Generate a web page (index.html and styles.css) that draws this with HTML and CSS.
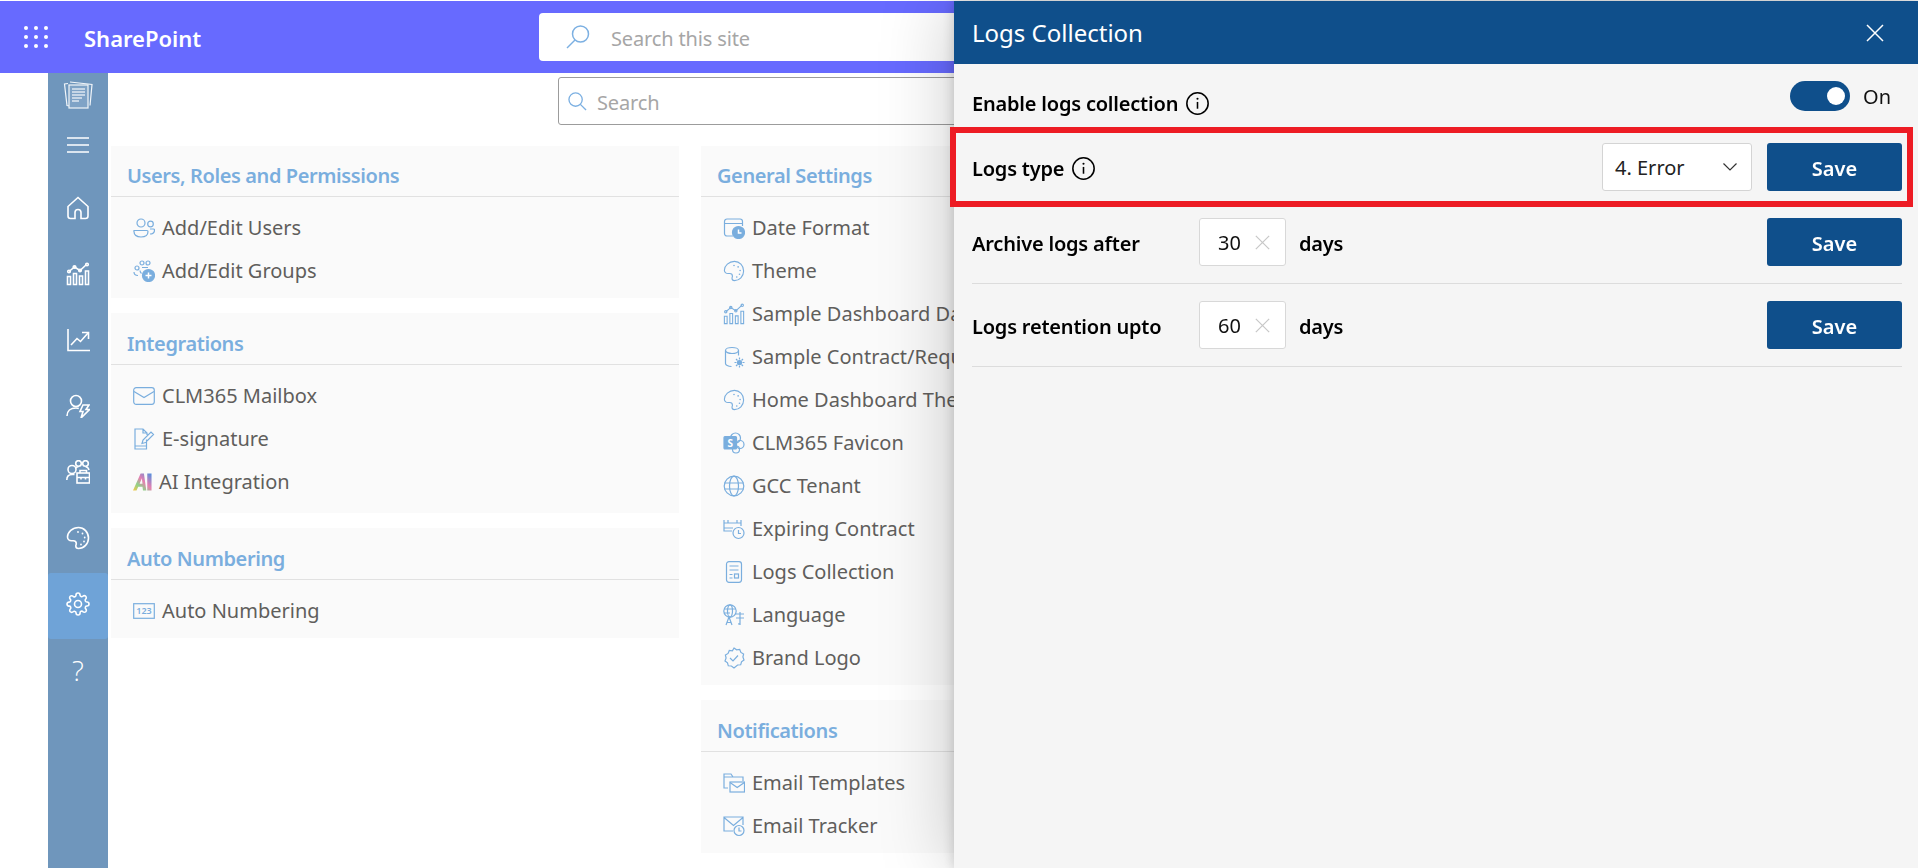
FILE: index.html
```html
<!DOCTYPE html>
<html lang="en">
<head>
<meta charset="utf-8">
<title>Logs Collection</title>
<link rel="stylesheet" href="styles.css">
</head>
<body>
<svg class="defs" xmlns="http://www.w3.org/2000/svg">
  <symbol id="i-chart" viewBox="0 0 24 24"><path d="M1.500 14.500h3v8h-3zM7.500 11.500h3v11h-3zM13.500 14h3v8.500h-3zM19.500 9h3v13.500h-3z"/><path d="M3 9.500l5.500-4.500 5.500 3.500 6.500-6"/><circle cx="3" cy="9.500" r="1.300"/><circle cx="8.500" cy="5" r="1.300"/><circle cx="14" cy="8.500" r="1.300"/><circle cx="21" cy="2.500" r="1.300"/></symbol>
  <symbol id="i-palette" viewBox="0 0 24 24"><path d="M12.500 1.500c5.500 0 10 4.700 10 10.500s-4.500 10.500-10 10.500c-1.500 0-2.700-1.100-2.700-2.500 0-.9.500-1.500.5-2.300 0-1.700-1.300-2.900-3-2.900H5.500c-2.300 0-4-1.700-4-3.700 0-5 5-9.600 11-9.600z"/><circle cx="12" cy="6" r=".9" class="dot"/><circle cx="16.500" cy="7.500" r=".9" class="dot"/><circle cx="18.700" cy="11.500" r=".9" class="dot"/><circle cx="18" cy="15.500" r=".9" class="dot"/><circle cx="15" cy="18.500" r=".9" class="dot"/></symbol>
  <symbol id="i-info" viewBox="0 0 22 22"><circle cx="11" cy="11" r="10.200"/><path d="M11 9.500v6.500"/><circle cx="11" cy="6.500" r="1" class="dot"/></symbol>
  <symbol id="i-close" viewBox="0 0 18 18"><path d="M1 1l16 16M17 1L1 17"/></symbol>
</svg>

<header class="topbar">
  <svg class="waffle" viewBox="0 0 24 22"><circle cx="2" cy="2" r="2"/><circle cx="12" cy="2" r="2"/><circle cx="22" cy="2" r="2"/><circle cx="2" cy="11" r="2"/><circle cx="12" cy="11" r="2"/><circle cx="22" cy="11" r="2"/><circle cx="2" cy="20" r="2"/><circle cx="12" cy="20" r="2"/><circle cx="22" cy="20" r="2"/></svg>
  <span class="brand">SharePoint</span>
  <div class="site-search">
    <svg class="site-search-icon" viewBox="0 0 24 24"><circle cx="14.500" cy="9" r="8"/><path d="M9 15L1 23"/></svg>
    <span class="placeholder">Search this site</span>
  </div>
</header>

<div class="shell">
  <nav class="rail">
    <div class="rail-top">
      <svg class="rail-logo" viewBox="0 0 30 30"><path d="M5 4.500l-3.500.5L4 26.500l3 .5"/><path d="M7 3l22 2.500-2 21"/><rect x="6" y="6" width="19" height="23" class="page"/><path d="M9 10h13M9 13h13M9 16h13M9 19h10M9 22h7" class="lines"/></svg>
      <svg class="rail-menu" viewBox="0 0 22 16"><path d="M0 1h22M0 8h22M0 15h22"/></svg>
    </div>
    <a class="rail-item"><svg viewBox="0 0 24 24"><path d="M2 10.500L12 1.500l10 9v9.500a2.500 2.500 0 0 1-2.500 2.500h-4.500v-6a3 3 0 0 0-6 0v6H4.500A2.500 2.500 0 0 1 2 20z"/></svg></a>
    <a class="rail-item"><svg><use href="#i-chart"/></svg></a>
    <a class="rail-item"><svg viewBox="0 0 24 24"><path d="M2 1v21.500h22"/><path d="M5 17l6-6.500 3.500 3L22 5"/><path d="M16 4.500h6.500V11"/></svg></a>
    <a class="rail-item"><svg viewBox="0 0 24 24"><circle cx="10" cy="7" r="5.500"/><path d="M1 22c0-5 3.500-8 9-8 1 0 2 .1 2.800.4"/><path d="M17 11h6l-3 4.500h3.500L15 24l2-6.500h-3z"/></svg></a>
    <a class="rail-item"><svg viewBox="0 0 24 24"><circle cx="6" cy="9.500" r="4"/><path d="M.8 20c0-3.500 2-5.500 5.200-5.500h2.500"/><circle cx="12.500" cy="3.500" r="2.800"/><circle cx="19.500" cy="3.500" r="2.800"/><path d="M9.500 8.500c.5-1 1.700-1.800 3-1.800M23 10c-.5-2-2-3.300-3.500-3.300"/><rect x="11" y="13" width="12.500" height="10"/><path d="M14 13v-2.500h6.500V13M11 17.500h12.500M15 17.500v2M19.500 17.500v2"/></svg></a>
    <a class="rail-item"><svg><use href="#i-palette"/></svg></a>
    <a class="rail-item rail-item-active"><svg viewBox="0 0 24 24"><circle cx="12" cy="12" r="3.500"/><path d="M19.400 15a1.650 1.650 0 0 0 .33 1.820l.06.06a2 2 0 0 1 0 2.830 2 2 0 0 1-2.830 0l-.06-.06a1.650 1.650 0 0 0-1.820-.33 1.650 1.650 0 0 0-1 1.510V21a2 2 0 0 1-2 2 2 2 0 0 1-2-2v-.09A1.650 1.650 0 0 0 9 19.400a1.650 1.650 0 0 0-1.820.33l-.06.06a2 2 0 0 1-2.830 0 2 2 0 0 1 0-2.830l.06-.06a1.650 1.650 0 0 0 .33-1.820 1.650 1.650 0 0 0-1.510-1H3a2 2 0 0 1-2-2 2 2 0 0 1 2-2h.09A1.650 1.650 0 0 0 4.600 9a1.650 1.650 0 0 0-.33-1.820l-.06-.06a2 2 0 0 1 0-2.830 2 2 0 0 1 2.830 0l.06.06a1.650 1.650 0 0 0 1.820.33H9a1.650 1.650 0 0 0 1-1.510V3a2 2 0 0 1 2-2 2 2 0 0 1 2 2v.09a1.650 1.650 0 0 0 1 1.510 1.650 1.650 0 0 0 1.820-.33l.06-.06a2 2 0 0 1 2.830 0 2 2 0 0 1 0 2.830l-.06.06a1.650 1.650 0 0 0-.33 1.820V9a1.650 1.650 0 0 0 1.510 1H21a2 2 0 0 1 2 2 2 2 0 0 1-2 2h-.09a1.650 1.650 0 0 0-1.510 1z"/></svg></a>
    <a class="rail-item rail-help">?</a>
  </nav>

  <main class="content">
    <div class="content-search">
      <svg class="content-search-icon" viewBox="0 0 20 20"><circle cx="8" cy="8" r="7"/><path d="M13 13l6 6"/></svg>
      <span class="placeholder">Search</span>
    </div>
    <div class="columns">
      <div class="column">
        <section class="card">
          <h2 class="card-title">Users, Roles and Permissions</h2>
          <ul class="items">
            <li class="item"><svg class="ico" viewBox="0 0 22 20"><circle cx="8" cy="5" r="4"/><circle cx="17.500" cy="6" r="2.800"/><path d="M1 12.500h13a1 1 0 0 1 1 1c0 3.500-3 5.500-7 5.500s-7-2-7-5.500a1 1 0 0 1 0-1zM17 11h3.500a1 1 0 0 1 1 1c0 2.500-2 4-4.500 4"/></svg>Add/Edit Users</li>
            <li class="item"><svg class="ico" viewBox="0 0 22 22"><circle cx="4" cy="8" r="2"/><circle cx="9" cy="3" r="2"/><circle cx="15" cy="3" r="2"/><path d="M1 12c0 2 1.500 3.500 4 3.500M9 7.500h6M7 10.500c0 1 .5 2 1.500 3"/><circle cx="15.500" cy="15.500" r="6" class="solid"/><path d="M15.500 12.500v6M12.500 15.500h6" class="on-solid"/></svg>Add/Edit Groups</li>
          </ul>
        </section>
        <section class="card">
          <h2 class="card-title">Integrations</h2>
          <ul class="items items-roomy">
            <li class="item"><svg class="ico" viewBox="0 0 22 18"><rect x=".7" y=".7" width="20.600" height="16.600" rx="2.500"/><path d="M1 4.500l10 6 10-6"/></svg>CLM365 Mailbox</li>
            <li class="item"><svg class="ico" viewBox="0 0 22 22"><path d="M13.500 11.500V21H2V1h8l4 4v2M10 1v4h4M2 18h11M9 15.500l1-3.500 8-8 2.500 2.500-8 8z"/></svg>E-signature</li>
            <li class="item item-ai"><svg class="ico-ai" viewBox="0 0 20 20"><defs><linearGradient id="ai-grad" x1="0" y1="1" x2="1" y2="0"><stop offset="0" stop-color="#f7c948"/><stop offset=".3" stop-color="#8fd18a"/><stop offset=".55" stop-color="#e87fb0"/><stop offset="1" stop-color="#4d8fe0"/></linearGradient></defs><path d="M0 19L8 1h3.500l2.500 18h-3.500l-.5-4H5.500l-1.800 4zM7 11.800h3L9.300 6zM15 1h4.500v18H15z" fill="url(#ai-grad)"/></svg>AI Integration</li>
          </ul>
        </section>
        <section class="card">
          <h2 class="card-title">Auto Numbering</h2>
          <ul class="items">
            <li class="item"><svg class="ico" viewBox="0 0 22 16"><rect x=".7" y=".7" width="20.600" height="14.600"/><text x="11" y="11.300" class="ico-num">123</text></svg>Auto Numbering</li>
          </ul>
        </section>
      </div>
      <div class="column">
        <section class="card">
          <h2 class="card-title">General Settings</h2>
          <ul class="items">
            <li class="item"><svg class="ico" viewBox="0 0 22 22"><path d="M10 19H4a2.500 2.500 0 0 1-2.500-2.500v-12A2.500 2.500 0 0 1 4 2h13a2.500 2.500 0 0 1 2.500 2.500V9M1.500 6.500h18"/><circle cx="15.500" cy="15.500" r="6" class="solid"/><path d="M15.500 12.500v3.500h3" class="on-solid"/></svg>Date Format</li>
            <li class="item"><svg class="ico"><use href="#i-palette"/></svg>Theme</li>
            <li class="item"><svg class="ico"><use href="#i-chart"/></svg>Sample Dashboard Data</li>
            <li class="item"><svg class="ico" viewBox="0 0 22 22"><ellipse cx="9" cy="4.500" rx="6.500" ry="3"/><path d="M2.500 4.500v13c0 1.500 2.500 3 6 3M15.500 4.500v5"/><circle cx="16.500" cy="16.500" r="2" class="solid"/><path d="M16.500 11.500v2M16.500 19.500v2M11.500 16.500h2M19.500 16.500h2M13 13l1.500 1.500M18.500 18.500L20 20M13 20l1.500-1.500M18.500 14.500L20 13"/></svg>Sample Contract/Request</li>
            <li class="item"><svg class="ico"><use href="#i-palette"/></svg>Home Dashboard Theme</li>
            <li class="item"><svg class="ico" viewBox="0 0 22 22"><circle cx="12.500" cy="6" r="5"/><circle cx="17" cy="12.500" r="4"/><circle cx="13" cy="17.500" r="3.500"/><rect x="1" y="4.500" width="12.500" height="12.500" rx="1" class="solid"/><text x="7.200" y="14.500" class="ico-s">S</text></svg>CLM365 Favicon</li>
            <li class="item"><svg class="ico" viewBox="0 0 22 22"><circle cx="11" cy="11" r="9.800"/><ellipse cx="11" cy="11" rx="4.500" ry="9.800"/><path d="M1.500 8h19M1.500 14h19"/></svg>GCC Tenant</li>
            <li class="item"><svg class="ico" viewBox="0 0 22 22"><path d="M1 2v10M18 2v6M5 2v3M14 2v3M1 5h17M1 10h9M1 12v1h8"/><circle cx="15.500" cy="15" r="5.500"/><path d="M15.500 12v3.500h2.500"/></svg>Expiring Contract</li>
            <li class="item"><svg class="ico" viewBox="0 0 22 22"><rect x="3.500" y=".7" width="15" height="20.600" rx="2.500"/><path d="M6.500 5h9M6.500 9h9M6.500 13.500h3M6.500 17h3"/><rect x="11.500" y="13" width="4" height="4"/></svg>Logs Collection</li>
            <li class="item"><svg class="ico" viewBox="0 0 22 22"><circle cx="7" cy="7" r="6.200"/><ellipse cx="7" cy="7" rx="2.500" ry="6.200"/><path d="M1 5h12M1 9h6M3 21l3-8 3 8M4 18.500h4M13 10h8M17 8v13M13 14h8M15 20c2 0 2-1 2-1"/></svg>Language</li>
            <li class="item"><svg class="ico" viewBox="0 0 22 22"><path d="M11 1l2.600 1.800 3.100-.3 1.200 2.900 2.700 1.600-.7 3 1.100 3-2.500 1.800-.8 3-3.100.2L11 21l-2.600-2-3.100-.2-.8-3L2 14l1.100-3-.7-3 2.700-1.600 1.200-2.900 3.100.3z"/><path d="M7 11l3 3 5-5.500"/></svg>Brand Logo</li>
          </ul>
        </section>
        <section class="card">
          <h2 class="card-title">Notifications</h2>
          <ul class="items">
            <li class="item"><svg class="ico" viewBox="0 0 22 20"><path d="M5 15H1V1h7l2 3h10v4M1 4h9"/><rect x="7" y="9" width="14.500" height="10"/><path d="M7 9.500l7.200 5 7.200-5"/></svg>Email Templates</li>
            <li class="item"><svg class="ico" viewBox="0 0 22 20"><path d="M10 15H1V1h19v8M1 1.500l9.500 8 9.500-8"/><circle cx="16" cy="14.500" r="5"/><path d="M16 11.500v3.500h2.500"/></svg>Email Tracker</li>
          </ul>
        </section>
      </div>
    </div>
  </main>
</div>

<aside class="panel">
  <div class="panel-head">
    <h1 class="panel-title">Logs Collection</h1>
    <svg class="panel-close"><use href="#i-close"/></svg>
  </div>
  <div class="panel-body">
    <div class="row row-enable">
      <div class="label label-enable">Enable logs collection <svg class="info"><use href="#i-info"/></svg></div>
      <div class="toggle-group">
        <span class="toggle"><span class="knob"></span></span>
        <span class="toggle-text">On</span>
      </div>
    </div>
    <div class="row row-type">
      <div class="label">Logs type <svg class="info"><use href="#i-info"/></svg></div>
      <div class="select">4. Error<svg class="chevron" viewBox="0 0 14 8"><path d="M.5.500L7 7l6.500-6.500"/></svg></div>
      <button class="save">Save</button>
    </div>
    <div class="row row-archive row-line">
      <div class="label label-fixed">Archive logs after</div>
      <div class="number">30<svg class="number-clear"><use href="#i-close"/></svg></div>
      <span class="unit">days</span>
      <button class="save">Save</button>
    </div>
    <div class="row row-line">
      <div class="label label-fixed">Logs retention upto</div>
      <div class="number">60<svg class="number-clear"><use href="#i-close"/></svg></div>
      <span class="unit">days</span>
      <button class="save">Save</button>
    </div>
  </div>
</aside>
<div class="callout"></div>
</body>
</html>
```
FILE: styles.css
```css
* { box-sizing: border-box; }
html, body { margin: 0; height: 868px; overflow: hidden; }
body {
  padding-top: 1px;
  background: #fff;
  font-family: "Noto Sans", "Open Sans", sans-serif;
  font-size: 20px;
  color: #000;
}
.defs { display: none; }

/* top bar */
.topbar {
  display: flex;
  align-items: center;
  height: 72px;
  background: #676aff;
  color: #fff;
}
.waffle { width: 24px; height: 22px; margin-left: 24px; fill: #fff; }
.brand { width: 117px; margin-left: 36px; padding-top: 2px; font-size: 22px; font-weight: 600; white-space: nowrap; }
.site-search {
  display: flex;
  align-items: center;
  width: 1000px;
  height: 48px;
  margin-left: 338px;
  background: #fff;
  border-radius: 4px;
  color: #a6a6a6;
  letter-spacing: -0.15px;
}
.placeholder { padding-top: 2px; }
.site-search-icon {
  width: 24px; height: 24px; margin-left: 27px; margin-right: 21px;
  fill: none; stroke: #7cb0e2; stroke-width: 1.500;
}

/* layout */
.shell { display: flex; padding-left: 48px; height: 795px; }
.rail { width: 60px; flex: none; background: #6f96bc; color: #fff; }
.rail-top { display: flex; flex-direction: column; align-items: center; height: 102px; padding-top: 6px; }
.rail-logo { width: 30px; height: 30px; fill: none; stroke: #f1f5f9; stroke-width: 1.200; }
.rail-logo .page { fill: #7fa3c6; }
.rail-logo .lines { stroke: #c6d6e6; stroke-width: 1.800; }
.rail-menu { width: 22px; height: 16px; margin-top: 28px; fill: none; stroke: #fff; stroke-width: 1.300; }
.rail-item {
  display: flex;
  align-items: center;
  justify-content: center;
  height: 66px;
  border-radius: 3px;
}
.rail-item svg {
  width: 24px; height: 24px;
  fill: none; stroke: #fff; stroke-width: 1.600;
}
.dot { fill: currentColor; stroke: none; }
.rail-item-active { margin: 2px 0 -2px; padding-bottom: 4px; background: #6fa3d7; }
.rail-help { font-size: 28px; font-weight: 300; font-family: "Open Sans", sans-serif; }

.content { flex: 1; min-width: 0; padding-left: 3px; }
.content-search {
  display: flex;
  align-items: center;
  width: 900px;
  height: 48px;
  margin: 4px 0 21px 447px;
  border: 1px solid #9c9c9c;
  border-radius: 3px;
  color: #a6a6a6;
  letter-spacing: -0.15px;
}
.content-search-icon {
  width: 19px; height: 19px; margin-left: 9px; margin-right: 10px;
  fill: none; stroke: #7cb0e2; stroke-width: 1.400;
}
.columns { display: grid; grid-template-columns: 568px 568px; column-gap: 22px; }
.column { display: flex; flex-direction: column; gap: 15px; }

/* cards */
.card { background: #fafafa; }
.card-title {
  height: 51px;
  margin: 0;
  padding: 16px 16px 0;
  border-bottom: 1px solid #e1e1e1;
  font-size: 20px;
  line-height: 28px;
  font-weight: 600;
  color: #7aaede;
  letter-spacing: -0.4px;
}
.card + .card .card-title { height: 52px; padding-top: 17px; }
.items { margin: 0; padding: 10px 0 5px; list-style: none; }
.items-roomy { padding-bottom: 9px; }
.item {
  display: flex;
  align-items: center;
  height: 43px;
  padding-left: 22px;
  padding-bottom: 2px;
  color: #605e5c;
  white-space: nowrap;
}
.ico {
  width: 22px; height: 22px; flex: none; margin-right: 7px;
  fill: none; stroke: #7aaede; stroke-width: 1.200; color: #7aaede;
}
.ico .solid { fill: #7aaede; }
.ico .on-solid { stroke: #fff; stroke-width: 1.500; }
.ico-num { font-family: "Noto Sans", sans-serif; font-size: 9px; font-weight: 600; fill: #7aaede; stroke: none; text-anchor: middle; }
.ico-s { font-family: "Noto Sans", sans-serif; font-size: 10px; font-weight: 700; fill: #fff; stroke: none; text-anchor: middle; }
.ico-ai { width: 19px; height: 20px; flex: none; margin-right: 7px; }

/* panel */
.panel {
  position: fixed;
  top: 1px; right: 0; bottom: 0;
  width: 964px;
  background: #f5f5f5;
  box-shadow: 0 0 12px rgba(0, 0, 0, .18), 0 0 70px rgba(0, 0, 0, .22);
}
.panel-head {
  display: flex;
  align-items: center;
  justify-content: space-between;
  height: 63px;
  padding: 0 34px 0 18px;
  background: #0f4f8b;
  color: #fff;
}
.panel-title { margin: 0; font-size: 24px; font-weight: 400; }
.panel-close { width: 18px; height: 18px; fill: none; stroke: #fff; stroke-width: 1.500; }
.panel-body { padding: 0 16px 0 18px; }
.row { display: flex; align-items: center; padding: 17px 0; }
.row-enable { align-items: flex-start; height: 63px; padding: 0; justify-content: space-between; }
.row-type { padding: 16px 0; }
.row-archive { padding-top: 11px; }
.row-line { border-bottom: 1px solid #dcdcdc; }
.label {
  display: flex;
  align-items: center;
  margin-top: 2px;
  font-weight: 600;
  color: #000;
  letter-spacing: -0.2px;
  white-space: nowrap;
}
.label-enable { margin-top: 26px; }
.label-fixed { width: 227px; }
.info { width: 23px; height: 23px; margin-left: 8px; fill: none; stroke: #000; stroke-width: 1.500; color: #000; }
.toggle-group { display: flex; align-items: center; gap: 13px; margin: 17px 11px 0 0; }
.toggle {
  display: flex;
  align-items: center;
  justify-content: flex-end;
  width: 60px; height: 30px;
  padding-right: 5px;
  border-radius: 15px;
  background: #0f4f8b;
}
.knob { width: 18px; height: 18px; border-radius: 50%; background: #fff; }
.toggle-text { color: #111; }
.select {
  display: flex;
  align-items: center;
  justify-content: space-between;
  width: 150px; height: 48px;
  margin-left: auto;
  padding: 0 14px 0 12px;
  border: 1px solid #d4d4d4;
  border-radius: 3px;
  background: #fff;
  color: #222;
}
.chevron { width: 14px; height: 8px; fill: none; stroke: #333; stroke-width: 1.200; }
.save {
  width: 135px; height: 48px;
  margin-left: 15px;
  padding: 2px 0 0;
  border: 0;
  border-radius: 3px;
  background: #0f4f8b;
  color: #fff;
  font: 600 20px "Noto Sans", sans-serif;
}
.row .unit + .save { margin-left: auto; }
.number {
  display: flex;
  align-items: center;
  justify-content: space-between;
  width: 87px; height: 48px;
  padding: 1px 15px 0 18px;
  border: 1px solid #d8d8d8;
  border-radius: 3px;
  background: #fff;
  color: #111;
}
.number-clear { width: 15px; height: 15px; fill: none; stroke: #c8c8c8; stroke-width: 1.500; }
.unit { margin: 2px 0 0 13px; font-weight: 600; letter-spacing: -0.2px; }

/* annotation over the screenshot */
.callout {
  position: fixed;
  left: 950px; top: 127px;
  width: 963px; height: 80px;
  border: 6px solid #ed1c24;
}
```
